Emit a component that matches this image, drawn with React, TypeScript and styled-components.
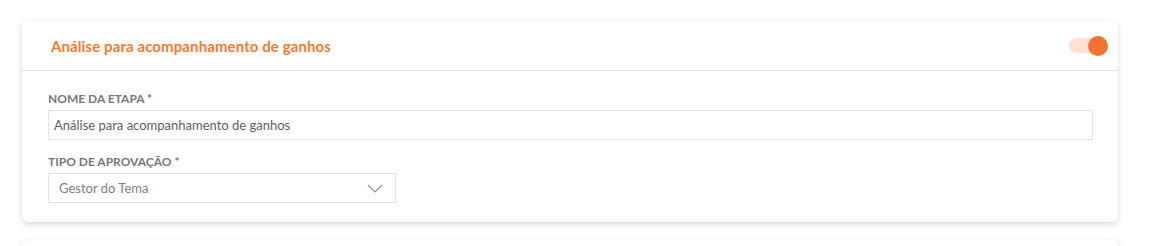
import React from "react";
import styled, { createGlobalStyle } from "styled-components";

const Global = createGlobalStyle`
  html, body { margin: 0; padding: 0; background: #ffffff; }
  body { font-family: Lato, "Open Sans", sans-serif; }
  * { box-sizing: border-box; }
`;

const Page = styled.div`
  padding: 21px 33px 0 22px;
  display: flex;
  flex-direction: column;
  gap: 18px;
`;

const Card = styled.section`
  background: #fff;
  border-radius: 6px;
  box-shadow: 0 2px 6px rgba(0, 0, 0, 0.16);
`;

const CardHeader = styled.header`
  height: 50px;
  display: flex;
  align-items: center;
  justify-content: space-between;
  padding: 0 10px 0 29px;
  border-bottom: 1px solid #e3e3e3;
`;

const Title = styled.h2`
  margin: 0;
  font-size: 15px;
  font-weight: 700;
  letter-spacing: 0.1px;
  color: #f47a32;
`;

const Switch = styled.div`
  position: relative;
  width: 39px;
  height: 20px;
  display: flex;
  align-items: center;
`;

const Track = styled.div`
  width: 34px;
  height: 15px;
  border-radius: 8px;
  background: #fde2d3;
`;

const Knob = styled.div`
  position: absolute;
  right: 0;
  top: 0;
  width: 20px;
  height: 20px;
  border-radius: 50%;
  background: #f27330;
`;

const CardBody = styled.div`
  padding: 21px 25px 19px 26px;
  display: flex;
  flex-direction: column;
  gap: 15px;
`;

const Field = styled.div`
  display: flex;
  flex-direction: column;
  gap: 4px;
`;

const Label = styled.label`
  font-size: 12px;
  line-height: 14px;
  font-weight: 700;
  color: #777;
  text-transform: uppercase;
`;

const Input = styled.div<{ $width?: string }>`
  height: 30px;
  width: ${(p) => p.$width ?? "100%"};
  border: 1px solid #e2e2e2;
  display: flex;
  align-items: center;
  justify-content: space-between;
  padding: 0 12px 0 5px;
  font-size: 13px;
  color: #606060;
`;

const SelectBox = styled(Input)`
  padding: 0 12px 0 10px;
  color: #808080;
`;

const NextCard = styled(Card)`
  height: 40px;
`;

export default function App() {
  return (
    <>
      <Global />
      <Page>
        <Card>
          <CardHeader>
            <Title>Análise para acompanhamento de ganhos</Title>
            <Switch>
              <Track />
              <Knob />
            </Switch>
          </CardHeader>
          <CardBody>
            <Field>
              <Label>Nome da etapa *</Label>
              <Input>Análise para acompanhamento de ganhos</Input>
            </Field>
            <Field>
              <Label>Tipo de aprovação *</Label>
              <SelectBox $width="348px">
                Gestor do Tema
                <svg width="16" height="9" viewBox="0 0 16 9" fill="none">
                  <path d="M1 1l7 7 7-7" stroke="#8a8a8a" strokeWidth="1.1" />
                </svg>
              </SelectBox>
            </Field>
          </CardBody>
        </Card>
        <NextCard />
      </Page>
    </>
  );
}
